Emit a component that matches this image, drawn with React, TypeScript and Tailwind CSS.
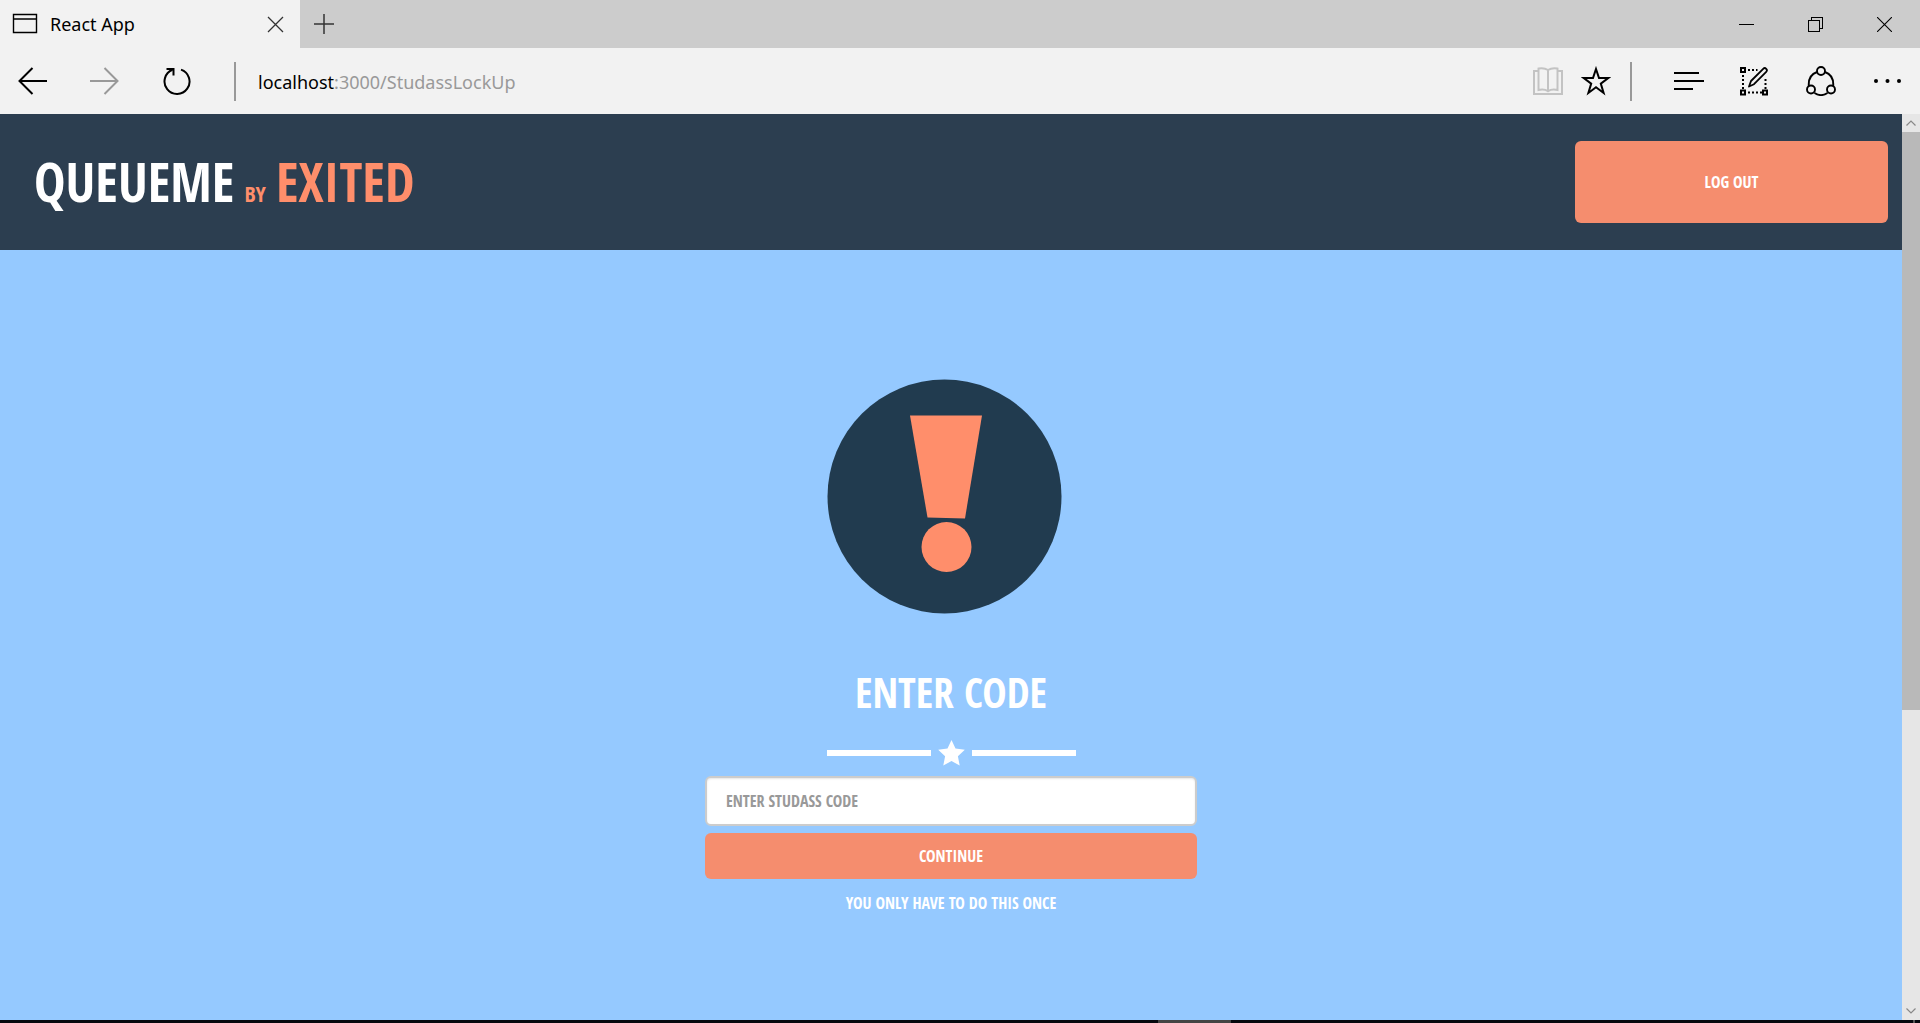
import type { ReactNode } from "react";

const ui = "font-['Noto_Sans','Open_Sans',sans-serif]";
const display = "font-['Open_Sans_Condensed','Roboto_Condensed','Open_Sans',sans-serif] font-bold uppercase";

function IconButton({ label, className = "", children }: { label: string; className?: string; children: ReactNode }) {
  return (
    <button type="button" aria-label={label} className={`flex shrink-0 items-center justify-center ${className}`}>
      {children}
    </button>
  );
}

function TitleBar() {
  return (
    <div className="flex h-12 bg-[#cccccc]">
      <div className="flex w-[300px] items-center bg-[#f2f2f2] pl-3 pr-4">
        <svg width="26" height="22" viewBox="0 0 26 22" fill="none" stroke="#000" strokeWidth="1.4">
          <path d="M1.500 1.500h23v18h-23zM1.500 6h23" />
        </svg>
        <span className="ml-3 flex-1 text-[18px] leading-6 text-black">React App</span>
        <IconButton label="Close tab">
          <svg width="17" height="17" viewBox="0 0 17 17" fill="none" stroke="#333" strokeWidth="1.3">
            <path d="M1 1l15 15M16 1L1 16" />
          </svg>
        </IconButton>
      </div>
      <IconButton label="New tab" className="w-12">
        <svg width="22" height="22" viewBox="0 0 22 22" fill="none" stroke="#333" strokeWidth="1.5">
          <path d="M11 1v20M1 11h20" />
        </svg>
      </IconButton>
      <div className="ml-auto flex pr-px">
        <IconButton label="Minimize" className="w-[69px]">
          <svg width="15" height="15" viewBox="0 0 15 15" stroke="#000" shapeRendering="crispEdges">
            <path d="M0 7.5h15" />
          </svg>
        </IconButton>
        <IconButton label="Restore" className="w-[69px]">
          <svg width="15" height="15" viewBox="0 0 15 15" fill="none" stroke="#000" shapeRendering="crispEdges">
            <path d="M.5 3.5h11v11H.5zM3.5 3.5v-3h11v11h-3" />
          </svg>
        </IconButton>
        <IconButton label="Close window" className="w-[69px]">
          <svg width="15" height="15" viewBox="0 0 15 15" stroke="#000" strokeWidth="1.1">
            <path d="M0 0l15 15M15 0L0 15" />
          </svg>
        </IconButton>
      </div>
    </div>
  );
}

function AddressBar() {
  return (
    <div className="flex h-[66px] items-center bg-[#f2f2f2]">
      <IconButton label="Back" className="w-[66px]">
        <svg width="30" height="28" viewBox="0 0 30 28" fill="none" stroke="#000" strokeWidth="2">
          <path d="M29 14H2M14.500 1L1.500 14l13 13" />
        </svg>
      </IconButton>
      <IconButton label="Forward" className="w-[78px]">
        <svg width="30" height="28" viewBox="0 0 30 28" fill="none" stroke="#999" strokeWidth="2">
          <path d="M0 14h27M14.500 1l13 13-13 13" />
        </svg>
      </IconButton>
      <IconButton label="Refresh" className="w-[66px]">
        <svg width="28" height="30" viewBox="0 0 28 30" fill="none" stroke="#000" strokeWidth="2">
          <path d="M18 3.600A12.500 12.500 0 1 1 9.500 3.800" />
          <path d="M3.500 3h7v6.500" />
        </svg>
      </IconButton>
      <span className="ml-6 h-[39px] w-0.5 bg-[#999]" />
      <a href="#studass" className="ml-[22px] flex-1 pt-0.5 text-[18px] leading-7 text-[#999]">
        <span className="text-black">localhost</span>:3000/StudassLockUp
      </a>
      <IconButton label="Reading view" className="w-12">
        <svg width="30" height="30" viewBox="0 0 30 30" fill="none" stroke="#c3c3c3" strokeWidth="2">
          <path d="M15 4C12 2 8.500 2 5.500 2.500V24c3.500-.8 6.500-.8 9.500 1.200 3-2 6-2 9.500-1.200V2.500C21.500 2 18 2 15 4zM15 4v22M5.500 5H1v23h28V5h-4.500" />
        </svg>
      </IconButton>
      <IconButton label="Add to favorites" className="w-12">
        <svg width="30" height="30" viewBox="0 0 30 30" fill="none" stroke="#000" strokeWidth="2">
          <path d="M15 3l3 9h9.200l-7.400 5.600 2.800 9.400-7.600-5.700-7.600 5.700 2.800-9.400-7.400-5.600h9.200z" />
        </svg>
      </IconButton>
      <span className="ml-2.5 h-[39px] w-0.5 bg-[#999]" />
      <IconButton label="Hub" className="ml-[25px] w-16">
        <svg width="30" height="20" viewBox="0 0 30 20" stroke="#000" strokeWidth="2">
          <path d="M0 2h25M0 10h30M0 18h19" />
        </svg>
      </IconButton>
      <IconButton label="Web note" className="w-[66px]">
        <svg width="28" height="29" viewBox="0 0 28 29" fill="none" stroke="#000" strokeWidth="2">
          <path d="M1 1h4v4H1zM1 23.500h4v4H1zM23 23.500h4v4h-4z" />
          <path d="M8 3h9.500M3 8v14M25.500 12v10M8 25.500h14" strokeDasharray="2 2" />
          <path d="M9 19.500l2-5.500L23.200 1.800a2 2 0 0 1 3 3L14 17.200z" strokeWidth="1.800" strokeLinejoin="round" />
        </svg>
      </IconButton>
      <IconButton label="Share" className="w-[68px]">
        <svg width="30" height="30" viewBox="0 0 30 30" fill="none" stroke="#000" strokeWidth="1.900">
          <circle cx="15" cy="5" r="4" />
          <circle cx="5" cy="23.500" r="4" />
          <circle cx="25" cy="23.500" r="4" />
          <path d="M11 6C5.500 8 2.300 13 2.800 20M19 6c5.500 2 8.700 7 8.200 14M8.500 27c4 2.600 9 2.600 13 0" />
        </svg>
      </IconButton>
      <IconButton label="More" className="w-[65px]">
        <svg width="27" height="4" viewBox="0 0 27 4" fill="#000">
          <circle cx="2" cy="2" r="2" />
          <circle cx="13.500" cy="2" r="2" />
          <circle cx="25" cy="2" r="2" />
        </svg>
      </IconButton>
    </div>
  );
}

function SiteHeader() {
  return (
    <header className={`flex h-[136px] items-center justify-between bg-[#2c3e50] pl-[34px] pr-3.5 text-white ${display}`}>
      <a href="#home" className="flex items-baseline pt-2.5 text-[53px] leading-[64px]">
        <span>QueueMe</span>
        <span className="ml-2.5 text-[22px] text-[#ff8e6b]">by</span>
        <span className="ml-2.5 text-[#ff8e6b]">Exited</span>
      </a>
      <button type="button" className="h-[82px] w-[313px] rounded-md bg-[#f58d6e] text-[16px] uppercase">
        Log out
      </button>
    </header>
  );
}

function CodeForm() {
  return (
    <main className={`flex flex-1 flex-col items-center bg-[#95c9ff] pb-20 pt-32 text-white ${display}`}>
      <svg width="248" height="236" viewBox="0 0 248 236" role="img" aria-label="Attention">
        <circle cx="117.500" cy="118.500" r="117" fill="#213b4f" />
        <path d="M83 37.500h72l-17 103-37.500-1z" fill="#ff8e6b" />
        <circle cx="119.500" cy="169" r="25" fill="#ff8e6b" />
      </svg>
      <h1 className="mt-12 text-[41px] leading-[60px]">Enter code</h1>
      <div className="mt-[18px] flex w-[249px] items-center gap-[7px]">
        <span className="h-1.5 flex-1 bg-white" />
        <svg width="27" height="26" viewBox="0 0 27 26" fill="#fff">
          <path d="M13.500 0l4 8.600 9.300 1.200-6.900 6.400 1.800 9.400-8.200-4.600-8.200 4.600 1.800-9.400L.2 9.800l9.300-1.200z" />
        </svg>
        <span className="h-1.5 flex-1 bg-white" />
      </div>
      <form className="mt-2.5 flex w-[492px] flex-col text-[16px]" onSubmit={(e) => e.preventDefault()}>
        <input
          type="text"
          aria-label="Studass code"
          placeholder="Enter studass code"
          className="h-[50px] rounded-md border-2 border-[#ccc] bg-white px-[19px] uppercase text-[#555] shadow-[inset_0_1px_2px_rgba(0,0,0,0.1)] placeholder:text-[#999]"
        />
        <button type="submit" className="mt-[7px] h-[46px] rounded-md bg-[#f58d6e] uppercase">
          Continue
        </button>
        <p className="mt-3 text-center leading-6">You only have to do this once</p>
      </form>
    </main>
  );
}

function Scrollbar() {
  return (
    <div className="flex w-[18px] shrink-0 flex-col bg-[#e6e6e6]">
      <IconButton label="Scroll up" className="h-[18px]">
        <svg width="10" height="6" viewBox="0 0 10 6" fill="none" stroke="#888" strokeWidth="1.200">
          <path d="M.5 5.500L5 1l4.500 4.500" />
        </svg>
      </IconButton>
      <div className="flex flex-1 flex-col">
        <div className="grow-[578] bg-[#b9b9b9]" />
        <div className="grow-[292]" />
      </div>
      <IconButton label="Scroll down" className="h-[18px]">
        <svg width="10" height="6" viewBox="0 0 10 6" fill="none" stroke="#888" strokeWidth="1.200">
          <path d="M.5.5L5 5 9.500.5" />
        </svg>
      </IconButton>
    </div>
  );
}

export default function App() {
  return (
    <div className={`flex min-h-screen flex-col ${ui}`}>
      <TitleBar />
      <AddressBar />
      <div className="flex flex-1">
        <div className="flex flex-1 flex-col">
          <SiteHeader />
          <CodeForm />
        </div>
        <Scrollbar />
      </div>
      <div className="flex h-[3px] justify-end bg-[#05070d]">
        <span className="w-[73px] bg-[#444]" />
        <span className="w-[682px]" />
        <span className="w-0.5 bg-[#555]" />
        <span className="w-[5px]" />
      </div>
    </div>
  );
}
